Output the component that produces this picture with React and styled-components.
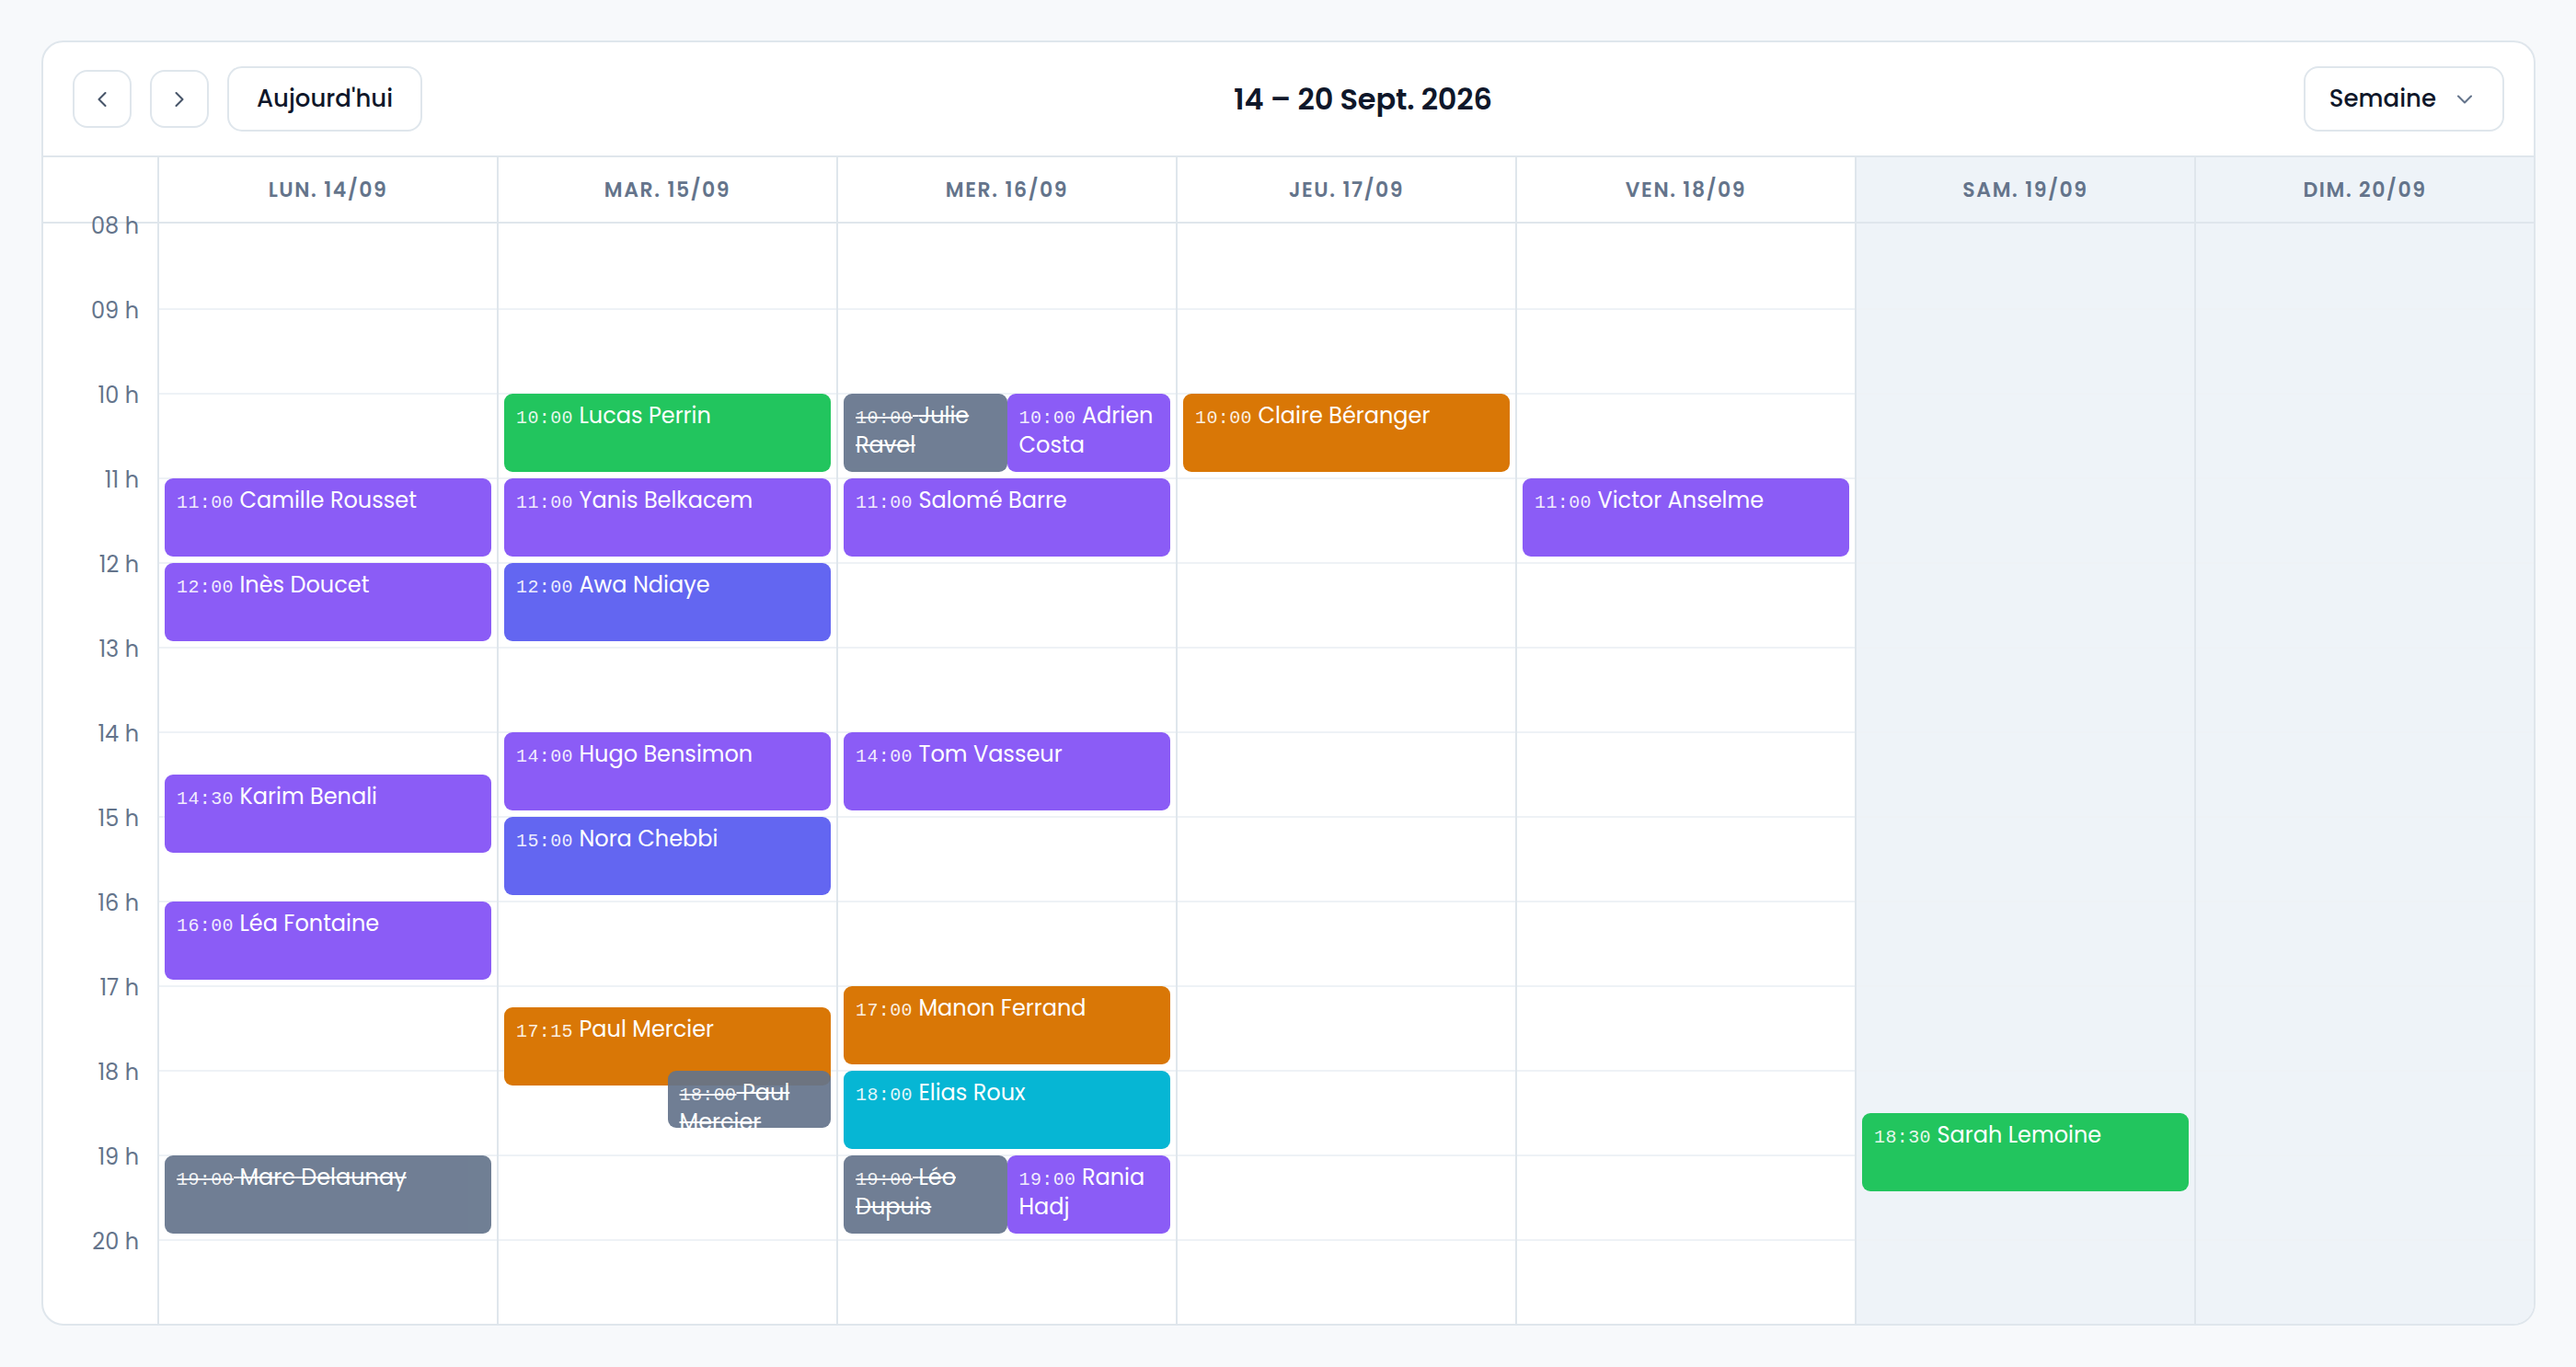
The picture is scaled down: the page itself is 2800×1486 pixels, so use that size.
import React from 'react';
import styled, { createGlobalStyle } from 'styled-components';
import { ChevronLeft, ChevronRight, ChevronDown } from 'lucide-react';

const HOUR = 92;
const START = 8;
const HOURS = Array.from({ length: 13 }, (_, i) => START + i);

const LINE = '#dfe6ec';
const HOUR_LINE = '#eef2f6';
const WEEKEND = '#eef3f8';

const COLORS = {
  purple: '#8b5cf6',
  green: '#22c55e',
  indigo: '#6366f1',
  orange: '#d97706',
  cyan: '#06b6d4',
  cancelled: '#64748b',
};

const ev = (time, name, color, dur = 1, col = 0, cols = 1, cancelled = false) => {
  const [h, m] = time.split(':').map(Number);
  return { time, name, color, start: h + m / 60, dur, col, cols, cancelled };
};

const DAYS = [
  {
    label: 'Lun. 14/09',
    events: [
      ev('11:00', 'Camille Rousset', 'purple'),
      ev('12:00', 'Inès Doucet', 'purple'),
      ev('14:30', 'Karim Benali', 'purple'),
      ev('16:00', 'Léa Fontaine', 'purple'),
      ev('19:00', 'Marc Delaunay', 'cancelled', 1, 0, 1, true),
    ],
  },
  {
    label: 'Mar. 15/09',
    events: [
      ev('10:00', 'Lucas Perrin', 'green'),
      ev('11:00', 'Yanis Belkacem', 'purple'),
      ev('12:00', 'Awa Ndiaye', 'indigo'),
      ev('14:00', 'Hugo Bensimon', 'purple'),
      ev('15:00', 'Nora Chebbi', 'indigo'),
      ev('17:15', 'Paul Mercier', 'orange'),
      ev('18:00', 'Paul Mercier', 'cancelled', 0.75, 1, 2, true),
    ],
  },
  {
    label: 'Mer. 16/09',
    events: [
      ev('10:00', 'Julie Ravel', 'cancelled', 1, 0, 2, true),
      ev('10:00', 'Adrien Costa', 'purple', 1, 1, 2),
      ev('11:00', 'Salomé Barre', 'purple'),
      ev('14:00', 'Tom Vasseur', 'purple'),
      ev('17:00', 'Manon Ferrand', 'orange'),
      ev('18:00', 'Elias Roux', 'cyan'),
      ev('19:00', 'Léo Dupuis', 'cancelled', 1, 0, 2, true),
      ev('19:00', 'Rania Hadj', 'purple', 1, 1, 2),
    ],
  },
  { label: 'Jeu. 17/09', events: [ev('10:00', 'Claire Béranger', 'orange')] },
  { label: 'Ven. 18/09', events: [ev('11:00', 'Victor Anselme', 'purple')] },
  { label: 'Sam. 19/09', weekend: true, events: [ev('18:30', 'Sarah Lemoine', 'green')] },
  { label: 'Dim. 20/09', weekend: true, events: [] },
];

const GlobalStyle = createGlobalStyle`
  html, body { margin: 0; padding: 0; background: #f7f9fb; }
  body {
    font-family: "Poppins", "Open Sans", "Noto Sans", sans-serif;
    color: #0f172a;
    -webkit-font-smoothing: antialiased;
  }
  * { box-sizing: border-box; }
`;

const Page = styled.div`
  padding: 44px 44px 44px 45px;
  min-height: 1486px;
`;

const Card = styled.div`
  background: #ffffff;
  border: 2px solid ${LINE};
  border-radius: 24px;
  overflow: hidden;
`;

const Toolbar = styled.div`
  height: 125px;
  padding: 0 32px;
  display: flex;
  align-items: center;
  justify-content: space-between;
  border-bottom: 2px solid ${LINE};
`;

const Group = styled.div`
  display: flex;
  align-items: center;
  gap: 20px;
`;

const IconButton = styled.button`
  width: 64px;
  height: 63px;
  display: flex;
  align-items: center;
  justify-content: center;
  padding: 0;
  background: #fff;
  border: 2px solid ${LINE};
  border-radius: 16px;
  color: #475569;
  cursor: pointer;
`;

const TextButton = styled.button`
  height: 71px;
  display: flex;
  align-items: center;
  gap: 17px;
  padding-left: ${(p) => (p.$select ? '26px' : '30px')};
  padding-right: ${(p) => (p.$select ? '27px' : '30px')};
  background: #fff;
  border: 2px solid ${LINE};
  border-radius: 16px;
  font-family: inherit;
  font-size: 26px;
  font-weight: 500;
  color: #0f172a;
  cursor: pointer;
  svg { color: #64748b; }
`;

const Title = styled.h1`
  margin: 0;
  font-size: 32px;
  font-weight: 600;
  color: #0f172a;
  letter-spacing: -0.2px;
`;

const Columns = styled.div`
  display: grid;
  grid-template-columns: 124px repeat(7, 1fr);
`;

const HeadRow = styled(Columns)`
  height: 72px;
  border-bottom: 2px solid ${LINE};
`;

const HeadCell = styled.div`
  display: flex;
  align-items: center;
  justify-content: center;
  border-left: ${(p) => (p.$corner ? 'none' : `2px solid ${LINE}`)};
  background: ${(p) => (p.$weekend ? WEEKEND : '#fff')};
  font-size: 22px;
  font-weight: 600;
  letter-spacing: 1.6px;
  text-transform: uppercase;
  color: #64748b;
`;

const TimeCol = styled.div`
  display: flex;
  flex-direction: column;
`;

const TimeCell = styled.div`
  height: ${HOUR}px;
  display: flex;
  justify-content: flex-end;
  align-items: flex-start;
  padding-right: 20px;
`;

const TimeLabel = styled.span`
  display: block;
  font-size: 24px;
  line-height: 30px;
  color: #64748b;
  transform: translateY(calc(-50% + 3px));
  position: relative;
  z-index: 2;
`;

const DayCol = styled.div`
  position: relative;
  border-left: 2px solid ${LINE};
  background: ${(p) => (p.$weekend ? WEEKEND : '#fff')};
`;

const HourSlot = styled.div`
  height: ${HOUR}px;
  border-top: ${(p) => (p.$first ? 'none' : `2px solid ${HOUR_LINE}`)};
`;

const EventCard = styled.div`
  position: absolute;
  padding: 9px 13px;
  border-radius: 9px;
  background: ${(p) => COLORS[p.$color]};
  color: #ffffff;
  font-size: 24px;
  line-height: 29px;
  overflow: hidden;
  opacity: ${(p) => (p.$cancelled ? 0.92 : 1)};
  z-index: 1;
`;

const EventTime = styled.span`
  font-family: "Liberation Mono", "DejaVu Sans Mono", monospace;
  font-size: 20px;
  letter-spacing: 0.4px;
  color: rgba(255, 255, 255, 0.9);
  text-decoration: ${(p) => (p.$cancelled ? 'line-through' : 'none')};
  text-decoration-thickness: 2px;
`;

const EventName = styled.span`
  text-decoration: ${(p) => (p.$cancelled ? 'line-through' : 'none')};
  text-decoration-thickness: 2px;
`;

function Event({ e }) {
  const style = {
    top: (e.start - START) * HOUR + 1,
    height: e.dur * HOUR - 7,
    left: `calc(6px + (100% - 12px) * ${e.col / e.cols})`,
    width: `calc((100% - 12px) / ${e.cols})`,
  };
  return (
    <EventCard $color={e.color} $cancelled={e.cancelled} style={style}>
      <EventTime $cancelled={e.cancelled}>{e.time}</EventTime>
      <EventName $cancelled={e.cancelled}> {e.name}</EventName>
    </EventCard>
  );
}

export default function App() {
  return (
    <>
      <GlobalStyle />
      <Page>
        <Card>
          <Toolbar>
            <Group>
              <IconButton aria-label="Précédent">
                <ChevronLeft size={28} strokeWidth={1.8} />
              </IconButton>
              <IconButton aria-label="Suivant">
                <ChevronRight size={28} strokeWidth={1.8} />
              </IconButton>
              <TextButton>Aujourd'hui</TextButton>
            </Group>
            <Title>14 – 20 Sept. 2026</Title>
            <TextButton $select>
              Semaine
              <ChevronDown size={28} strokeWidth={1.8} />
            </TextButton>
          </Toolbar>
          <HeadRow>
            <HeadCell $corner />
            {DAYS.map((d) => (
              <HeadCell key={d.label} $weekend={d.weekend}>
                {d.label}
              </HeadCell>
            ))}
          </HeadRow>
          <Columns>
            <TimeCol>
              {HOURS.map((h) => (
                <TimeCell key={h}>
                  <TimeLabel>{String(h).padStart(2, '0')} h</TimeLabel>
                </TimeCell>
              ))}
            </TimeCol>
            {DAYS.map((d) => (
              <DayCol key={d.label} $weekend={d.weekend}>
                {HOURS.map((h, i) => (
                  <HourSlot key={h} $first={i === 0} />
                ))}
                {d.events.map((e, i) => (
                  <Event key={i} e={e} />
                ))}
              </DayCol>
            ))}
          </Columns>
        </Card>
      </Page>
    </>
  );
}
